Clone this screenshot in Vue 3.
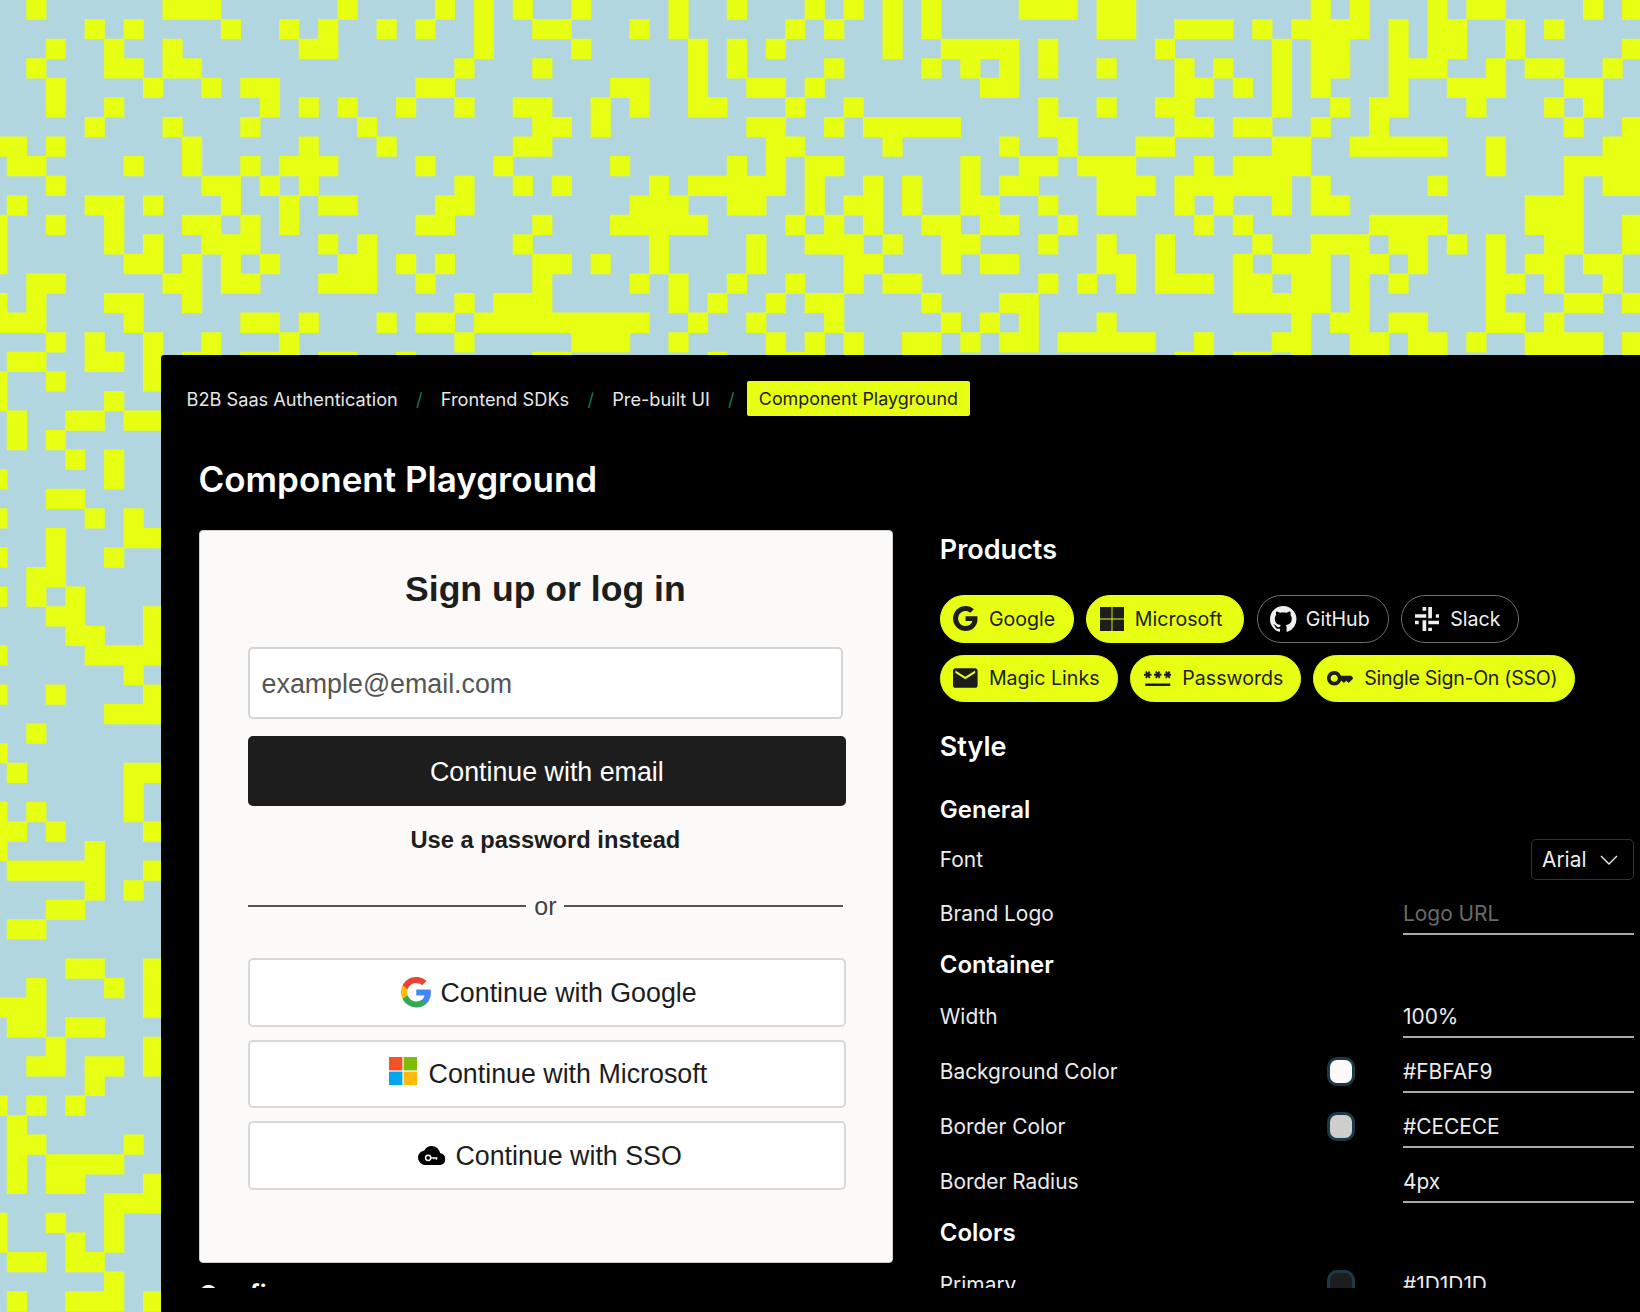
<script setup>
const topRows = [
  '2 9-11 18 23 25 27 30 35 38 42 44 46 48 53-55 57-58 68 70 74 76-77 82 84',
  '5 7 12 15 17 20 22 25 28-29 33 35 41 43 46 48 57-58 61-63 65 67-70 72 74-75 78 80',
  '3 6 9 16-17 25 30 36 38 40 46 49-52 54 60 66 68-69 72 74-75 78 84',
  '2 6-7 9-10 24 28 36 38 43 48 50 52 54 57 61 63 66 68-69 72-74 77 79-80 83',
  '3 8 11 13-14 22-23 32-33 36 39-40 42 51-52 61-62 64 66 68 72 75-77 81-82',
  '3 6 14 16 18 21 24 27-28 31 33 36-37 41 44 54 57 60-61 66 69 71-72 76 80 82',
  '5 9 13 19 28-29 31 39-40 43 45-49 54-55 61-62 64-65 68 71 81 84',
  '0-1 3 10 16 20 27-28 40-41 46 52 55 59-60 66-67 70-74 77 83-84',
  '1-2 7 10 13 15-17 22 26 32 38 40 42-43 50 53-54 56-58 62 64-67 77 81-84',
  '3 11-12 14 16 24 27 29 34 36-40 42 45 47 50 52-53 57-59 61-66 68 74 81 83-84',
  '1 5-6 8 12 15 17-18 23-24 33-35 38-39 42 44-45 47 50-51 54 57-58 61 63 66 68-69 79-81',
  '0 3 6 10-11 13 15 22-23 28 32-36 41 43 45 48-49 51-52 55 62 64 71-74 79-81 84',
  '0 6 8 11-13 17 19 27 34 39 42-44 46 49-50 54 57 60 65 68-70 72-73 75 77 80-81 84',
  '0 7-8 10 12 14 18-19 21 23 28-29 31 34 39 44-45 49 51-52 57-58 60 64 66-68 70-71 73 77 79-80 82-83',
  '2-3 9-10 12-13 17-19 22 28 33 35 38 41 44 46-47 54 56 58 60-62 64-65 67-68 70 72 77-78 80 83',
  '0 2 6-7 10 24 26-28 35 37 40 42-43 48 52-53 64-68 70 77 81-82 84',
  '0-2 7 13-14 16 20 22-23 25-33 36 39 43 49 51 53 57 67 69-70 72-73 77-78 80',
  '3 5 8 11 15 24 30-32 35 40 42 44 47-48 50 52-53 55-59 62 66-67 70-71 73-74 76 79-82 84',
  '1-2 5-6 8 10-11 13-15 17-18 21 28-29 37 40-42 44 47-48 61-62 64-65 67 70-71 73-74 79-82 84'
]
const leftRows = [
  '0 3 8', '0 6', '1 4-5 7-8', '1 3', '4 6', '0 6', '3-4', '0 5 7', '3 7-8', '0 3 6', '2-3', '0 2 4', '3-4 8',
  '4-5 8', '0 5-8', '7', '0 3 8', '6-8', '2', '0', '1 7-8', '7', '0 2 7', '0-1 3 8',
  '0 5', '1-5 8', '5 7', '3-4', '1-2', '', '4-5 8', '2 6 8', '0-2 8', '1-2 4-5', '3 8', '2-3 5-6 8', '5', '0 2 4', '1',
  '1-2 7', '1 3-6', '1 3-4 8', '6-8', '0 3 6', '0 4 6', '1-2 4-5', '6', '1 4-6 8'
]

const cellWidth = 19.46
const cellHeight = 19.57

function rowToPath(spec, row) {
  if (!spec) return ''
  const y = (-0.5 + cellHeight * row).toFixed(2)
  return spec.split(' ').map((part) => {
    const [from, to = from] = part.split('-').map(Number)
    const x = (6.8 + cellWidth * (from - 1)).toFixed(2)
    const width = (cellWidth * (to - from + 1) + 0.7).toFixed(2)
    return `M${x} ${y}h${width}v${(cellHeight + 0.7).toFixed(2)}h-${width}z`
  }).join('')
}

const patternPath = [
  ...topRows.map((spec, i) => rowToPath(spec, i)),
  ...leftRows.map((spec, i) => rowToPath(spec, i + 19))
].join('')

const crumbs = ['B2B Saas Authentication', 'Frontend SDKs', 'Pre-built UI']

const gLetter = 'M22.56 12.25c0-.78-.07-1.53-.2-2.25H12v4.26h5.92c-.26 1.37-1.04 2.53-2.21 3.31v2.77h3.57c2.08-1.92 3.28-4.74 3.28-8.09zM12 23c2.97 0 5.46-.98 7.28-2.66l-3.57-2.77c-.98.66-2.23 1.06-3.71 1.06-2.86 0-5.29-1.93-6.16-4.53H2.18v2.84C3.99 20.53 7.7 23 12 23zM5.84 14.09c-.22-.66-.35-1.36-.35-2.09s.13-1.43.35-2.09V7.07H2.18C1.43 8.55 1 10.22 1 12s.43 3.45 1.18 4.93l2.85-2.22.81-.62zM12 5.38c1.62 0 3.06.56 4.21 1.64l3.15-3.15C17.45 2.09 14.97 1 12 1 7.7 1 3.99 3.47 2.18 7.07l3.66 2.84c.87-2.6 3.3-4.53 6.16-4.53z'

const products = [
  { name: 'Google', on: true, w: 134, box: '1 1 21.6 22', iw: 24.6, ih: 25, d: gLetter },
  { name: 'Microsoft', on: true, w: 158, box: '1 1 22 22', iw: 24, ih: 24, d: 'M1 1h10.6v10.6H1zM12.4 1H23v10.6H12.4zM1 12.4h10.6V23H1zM12.4 12.4H23V23H12.4z' },
  { name: 'GitHub', on: false, w: 132, box: '0 0 16 16', iw: 26.5, ih: 26.5, d: 'M8 0C3.58 0 0 3.58 0 8c0 3.54 2.29 6.53 5.47 7.59.4.07.55-.17.55-.38 0-.19-.01-.82-.01-1.49-2.01.37-2.53-.49-2.69-.94-.09-.23-.48-.94-.82-1.13-.28-.15-.68-.52-.01-.53.63-.01 1.08.58 1.23.82.72 1.21 1.87.87 2.33.66.07-.52.28-.87.51-1.07-1.78-.2-3.64-.89-3.64-3.95 0-.87.31-1.59.82-2.15-.08-.2-.36-1.02.08-2.12 0 0 .67-.21 2.2.82.64-.18 1.32-.27 2-.27.68 0 1.36.09 2 .27 1.53-1.04 2.2-.82 2.2-.82.44 1.1.16 1.92.08 2.12.51.56.82 1.27.82 2.15 0 3.07-1.87 3.75-3.65 3.95.29.25.54.73.54 1.48 0 1.07-.01 1.93-.01 2.2 0 .21.15.46.55.38A8.013 8.013 0 0016 8c0-4.42-3.58-8-8-8z' },
  { name: 'Slack', on: false, w: 118, box: '0 0 24 24', iw: 24.5, ih: 24.5, d: 'M0 7h11v3.6H0zM7.4 0H11v3.6H7.4zM13 0h3.6v11H13zM20.4 7H24v3.6h-3.6zM13 13.4h11V17H13zM13 20.4h3.6V24H13zM7.4 13H11v11H7.4zM0 13.4h3.6V17H0z' },
  { name: 'Magic Links', on: true, w: 178, box: '2 4 20 16', iw: 24.6, ih: 20, d: 'M20 4H4c-1.1 0-2 .9-2 2v12c0 1.1.9 2 2 2h16c1.1 0 2-.9 2-2V6c0-1.1-.9-2-2-2zm0 4l-8 5-8-5V6l8 5 8-5v2z' },
  { name: 'Passwords', on: true, w: 170.5, box: '1 7 22 12', iw: 27.5, ih: 15, d: 'M2 17h20v2H2zm1.15-4.05L4 11.47l.85 1.48 1.3-.75-.85-1.48H7v-1.5H5.3l.85-1.47L4.85 7 4 8.47 3.15 7l-1.3.75.85 1.47H1v1.5h1.7l-.85 1.48 1.3.75zm6.7-.75l1.3.75.85-1.48.85 1.48 1.3-.75-.85-1.48H15v-1.5h-1.7l.85-1.47-1.3-.75L12 8.47 11.15 7l-1.3.75.85 1.47H9v1.5h1.7l-.85 1.48zM23 9.22h-1.7l.85-1.47-1.3-.75L20 8.47 19.15 7l-1.3.75.85 1.47H17v1.5h1.7l-.85 1.48 1.3.75.85-1.48.85 1.48 1.3-.75-.85-1.48H23v-1.5z' },
  { name: 'Single Sign-On (SSO)', on: true, w: 262, box: '1 6 22 12', iw: 26.5, ih: 14.5, d: 'M21 10h-8.35C11.83 7.67 9.61 6 7 6c-3.31 0-6 2.69-6 6s2.69 6 6 6c2.61 0 4.83-1.67 5.65-4H13l2 2 2-2 2 2 4-4.04L21 10zM7 15c-1.65 0-3-1.35-3-3s1.35-3 3-3 3 1.35 3 3-1.35 3-3 3z' }
]

const containerRows = [
  { label: 'Width', value: '100%' },
  { label: 'Background Color', value: '#FBFAF9', swatch: '#FBFAF9' },
  { label: 'Border Color', value: '#CECECE', swatch: '#CECECE' },
  { label: 'Border Radius', value: '4px' }
]
</script>

<template>
  <div class="page">
    <svg class="pattern" width="1640" height="1312" viewBox="0 0 1640 1312" aria-hidden="true">
      <path :d="patternPath" fill="#e6ff13" />
    </svg>

    <main class="panel">
      <nav class="crumbs">
        <template v-for="crumb in crumbs" :key="crumb">
          <span>{{ crumb }}</span>
          <i class="sep">/</i>
        </template>
        <span class="current">Component Playground</span>
      </nav>

      <h1>Component Playground</h1>

      <div class="workspace">
        <section class="preview">
          <div class="card">
            <h2>Sign up or log in</h2>
            <div class="email">example@email.com</div>
            <button class="primary">Continue with email</button>
            <a class="link">Use a password instead</a>
            <div class="divider"><span>or</span></div>
            <div class="providers">
              <button class="provider google">
                <svg viewBox="1 1 21.6 22" width="30" height="30.5">
                  <path fill="#4285F4" d="M22.56 12.25c0-.78-.07-1.53-.2-2.25H12v4.26h5.92c-.26 1.37-1.04 2.53-2.21 3.31v2.77h3.57c2.08-1.92 3.28-4.74 3.28-8.09z" />
                  <path fill="#34A853" d="M12 23c2.97 0 5.46-.98 7.28-2.66l-3.57-2.77c-.98.66-2.23 1.06-3.71 1.06-2.86 0-5.29-1.93-6.16-4.53H2.18v2.84C3.99 20.53 7.7 23 12 23z" />
                  <path fill="#FBBC05" d="M5.84 14.09c-.22-.66-.35-1.36-.35-2.09s.13-1.43.35-2.09V7.07H2.18C1.43 8.55 1 10.22 1 12s.43 3.45 1.18 4.93l2.85-2.22.81-.62z" />
                  <path fill="#EA4335" d="M12 5.38c1.62 0 3.06.56 4.21 1.64l3.15-3.15C17.45 2.09 14.97 1 12 1 7.7 1 3.99 3.47 2.18 7.07l3.66 2.84c.87-2.6 3.3-4.53 6.16-4.53z" />
                </svg>
                Continue with Google
              </button>
              <button class="provider ms">
                <svg viewBox="0 0 28 28" width="28" height="28">
                  <rect x="0" y="0" width="13.4" height="13.4" fill="#F35325" />
                  <rect x="14.6" y="0" width="13.4" height="13.4" fill="#81BC06" />
                  <rect x="0" y="14.6" width="13.4" height="13.4" fill="#05A6F0" />
                  <rect x="14.6" y="14.6" width="13.4" height="13.4" fill="#FFBA08" />
                </svg>
                Continue with Microsoft
              </button>
              <button class="provider sso">
                <svg viewBox="0 0 26 18" width="27.5" height="19">
                  <path fill="#000" d="M20.96 6.8C20.22 3 16.9 0 13 0 9.9 0 7.1 1.8 5.8 4.5 2.5 4.8 0 7.6 0 11c0 3.8 3 7 6.5 7h14.1c3 0 5.4-2.5 5.4-5.6 0-3-2.2-5.4-5.04-5.6z" />
                  <circle cx="9.6" cy="11.2" r="2.5" fill="none" stroke="#fff" stroke-width="1.4" />
                  <path d="M12 11.2h6.4M17.4 11.2v1.9M15 11.2v1.4" fill="none" stroke="#fff" stroke-width="1.3" />
                </svg>
                Continue with SSO
              </button>
            </div>
          </div>
          <h3 class="config-title">Config</h3>
        </section>

        <section class="settings">
          <h2 class="section-title">Products</h2>
          <div class="chips">
            <button v-for="p in products" :key="p.name" class="chip" :class="{ on: p.on }" :style="{ width: p.w + 'px' }">
              <svg :viewBox="p.box" :width="p.iw" :height="p.ih"><path :d="p.d" fill="currentColor" /></svg>
              {{ p.name }}
            </button>
          </div>

          <h2 class="section-title style-title">Style</h2>

          <h3 class="group-title general">General</h3>
          <div class="row font-row">
            <span class="label">Font</span>
            <div class="select">
              Arial
              <svg viewBox="0 0 18 10" width="18" height="10"><path d="M1 1l8 8 8-8" fill="none" stroke="currentColor" stroke-width="1.4" /></svg>
            </div>
          </div>
          <div class="row logo-row">
            <span class="label">Brand Logo</span>
            <div class="field placeholder">Logo URL</div>
          </div>

          <h3 class="group-title container">Container</h3>
          <div class="group">
            <div v-for="r in containerRows" :key="r.label" class="row">
              <span class="label">{{ r.label }}</span>
              <span v-if="r.swatch" class="swatch" :style="{ background: r.swatch }"></span>
              <div class="field">{{ r.value }}</div>
            </div>
          </div>

          <h3 class="group-title colors">Colors</h3>
          <div class="row primary-row">
            <span class="label">Primary</span>
            <span class="swatch" :style="{ background: '#1D1D1D' }"></span>
            <div class="field">#1D1D1D</div>
          </div>
        </section>
      </div>
    </main>
  </div>
</template>

<style>
html, body { margin: 0; background: #b2d6df; overflow: hidden; }
</style>

<style scoped>
.page {
  position: relative;
  width: 1640px;
  height: 1312px;
  overflow: hidden;
  padding-top: 355px;
  box-sizing: border-box;
  background: #b2d6df;
  font-family: Inter, "Liberation Sans", sans-serif;
}
.pattern { position: absolute; left: 0; top: 0; }
.panel {
  position: relative;
  margin-left: 161px;
  height: 957px;
  background: #000;
  color: #f4f4f4;
  border-top-left-radius: 3px;
  overflow: hidden;
}
.crumbs {
  display: flex;
  align-items: center;
  height: 35px;
  padding: 26px 0 0 25.5px;
  font-size: 18.2px;
  line-height: 34px;
  color: #e6e6e6;
}
.sep { width: 43px; text-align: center; font-style: normal; color: #0e7a57; }
.current {
  margin-left: -6px;
  padding: 0 12px;
  height: 35px;
  font-size: 17.9px;
  line-height: 35px;
  background: #e6ff13;
  color: #1d1d1d;
  border-radius: 2px;
}
h1 {
  margin: 41px 0 29px 37.5px;
  font-size: 35px;
  line-height: 44px;
  font-weight: 600;
  color: #fff;
}
.workspace {
  display: flex;
  gap: 47.2px;
  height: 758px;
  padding: 0 6px 0 37.6px;
  overflow: hidden;
  box-sizing: border-box;
}
.preview { width: 694px; flex: none; }
.card {
  box-sizing: border-box;
  height: 733px;
  padding: 31px 48.5px 0 48px;
  background: #fbfaf9;
  border: 1px solid #cecece;
  border-radius: 4px;
  font-family: "Liberation Sans", Arial, sans-serif;
  color: #1d1d1d;
  text-align: center;
}
.card h2 { margin: 0 0 31px; font-size: 35.6px; line-height: 54px; font-weight: 700; }
.email {
  box-sizing: border-box;
  height: 72px;
  padding: 0 12px;
  line-height: 70px;
  background: #fff;
  border: 2px solid #d4d4d4;
  border-radius: 5px;
  font-size: 26.8px;
  color: #555;
  text-align: left;
}
.primary, .provider {
  display: flex;
  align-items: center;
  justify-content: center;
  width: calc(100% + 3px);
  box-sizing: border-box;
  border-radius: 5px;
  font: 26.8px "Liberation Sans", Arial, sans-serif;
  padding: 2px 0 0;
}
.primary {
  height: 70px;
  margin-top: 17px;
  background: #1d1d1d;
  border: 0;
  color: #fff;
}
.link { display: block; margin-top: 19px; margin-bottom: -1px; font-size: 23.7px; line-height: 30px; font-weight: 700; }
.divider {
  display: flex;
  align-items: center;
  gap: 8px;
  margin-top: 37px;
  height: 30px;
  font-size: 25px;
  color: #444;
}
.divider::before, .divider::after { content: ""; flex: 1; height: 2px; background: #555; }
.providers { display: flex; flex-direction: column; gap: 13px; margin-top: 37px; }
.provider {
  height: 68.5px;
  gap: 9.5px;
  background: #fff;
  border: 2px solid #d8d8d8;
  color: #1d1d1d;
}
.provider.google { padding-left: 4px; }
.provider.google svg { margin-top: -2px; }
.provider.ms { gap: 12px; padding-left: 2px; }
.provider.ms svg { margin-top: -8px; }
.provider.sso { gap: 10px; padding-left: 6px; }
.provider.sso svg { margin-top: -2px; }
.config-title { margin: 17px 0 0; font-size: 26px; line-height: 30px; font-weight: 600; color: #fff; }
.settings { flex: 1; min-width: 0; padding-top: 1px; }
.section-title { margin: 0; font-size: 27px; line-height: 38px; font-weight: 600; color: #fff; }
.chips { display: flex; flex-wrap: wrap; gap: 12px 12.5px; margin-top: 26px; }
.chip {
  display: flex;
  align-items: center;
  gap: 11px;
  height: 47.5px;
  padding: 0 0 0 12.5px;
  box-sizing: border-box;
  border-radius: 24px;
  background: #000;
  border: 1px solid #6c6c6c;
  color: #f0f0f0;
  font: 19.6px Inter, "Liberation Sans", sans-serif;
  white-space: nowrap;
}
.chip:nth-child(3) { gap: 9px; }
.chip:last-child { letter-spacing: -0.3px; }
.chip.on { background: #e6ff13; border-color: #e6ff13; color: #1d1d1d; }
.style-title { margin-top: 26px; }
.group-title { margin: 0; font-size: 24px; line-height: 30px; font-weight: 600; color: #fff; }
.general { margin-top: 29px; }
.container { margin-top: 14.7px; }
.colors { margin-top: 15.3px; }
.row {
  display: flex;
  align-items: center;
  height: 44px;
  font-size: 20.9px;
  color: #ececec;
}
.font-row { margin-top: 12.5px; }
.logo-row { margin-top: 9.7px; }
.group { display: flex; flex-direction: column; gap: 11px; margin-top: 13.7px; }
.primary-row { margin-top: 14px; }
.label { flex: 1; padding-top: 2px; }
.font-row .label { padding-top: 0; }
.logo-row .label { padding-top: 0; }
.select {
  display: flex;
  align-items: center;
  justify-content: space-between;
  box-sizing: border-box;
  width: 103px;
  height: 41px;
  padding: 0 15px 0 10px;
  border: 1px solid #333;
  border-radius: 5px;
}
.field {
  box-sizing: border-box;
  display: flex;
  align-items: center;
  width: 231px;
  height: 44px;
  padding-top: 3px;
  border-bottom: 2px solid #a8a8a8;
}
.placeholder { color: #6a6a6a; }
.swatch {
  box-sizing: border-box;
  width: 28px;
  height: 29px;
  margin-top: 2px;
  margin-right: 48px;
  border: 3px solid #1c3a46;
  border-radius: 10px;
}
</style>
